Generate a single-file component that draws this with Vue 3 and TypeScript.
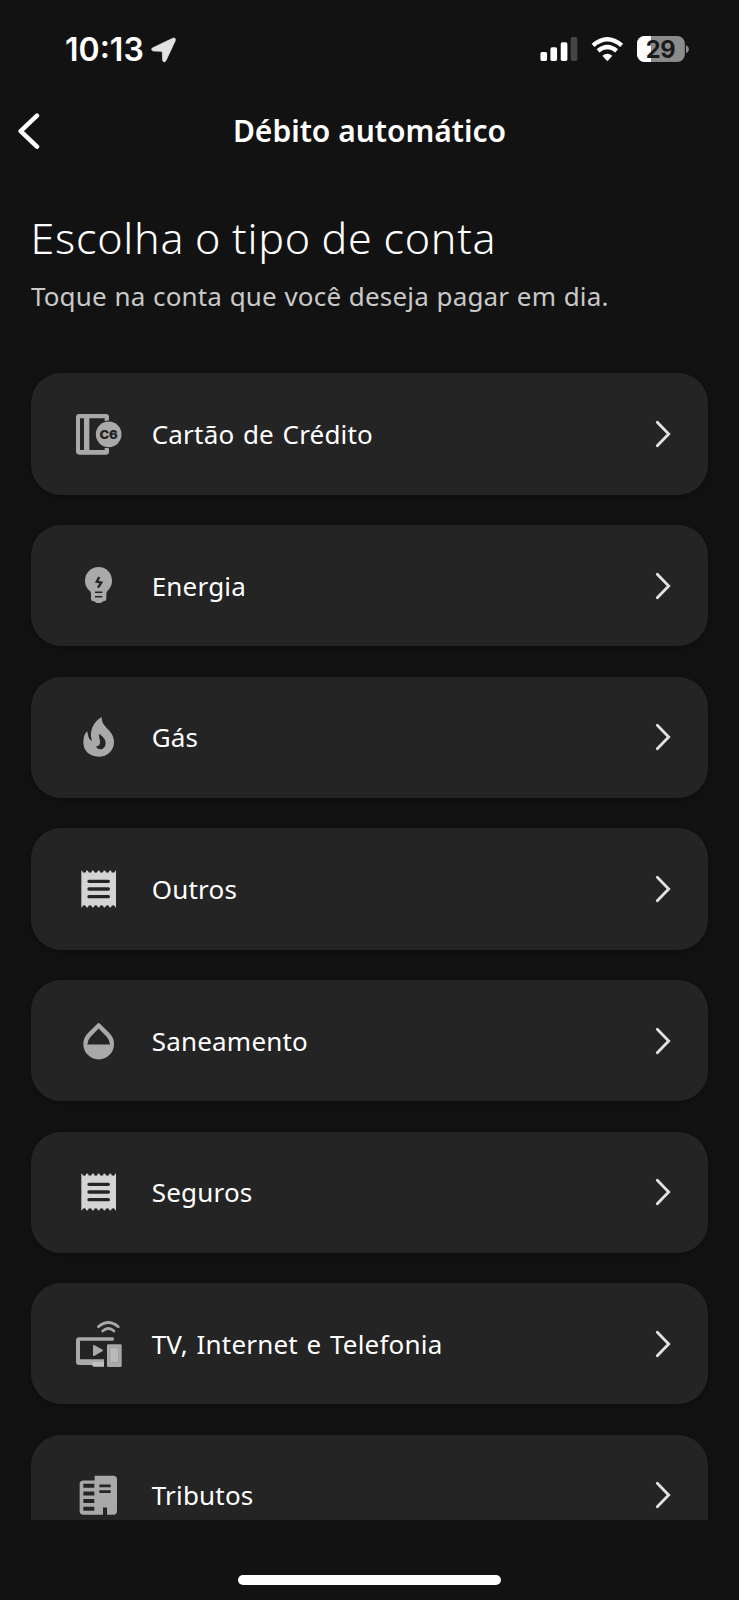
<script setup lang="ts">
type IconName = 'card' | 'bulb' | 'flame' | 'receipt' | 'drop' | 'devices' | 'building'

interface AccountType {
  label: string
  icon: IconName
}

const accounts: AccountType[] = [
  { label: 'Cartão de Crédito', icon: 'card' },
  { label: 'Energia', icon: 'bulb' },
  { label: 'Gás', icon: 'flame' },
  { label: 'Outros', icon: 'receipt' },
  { label: 'Saneamento', icon: 'drop' },
  { label: 'Seguros', icon: 'receipt' },
  { label: 'TV, Internet e Telefonia', icon: 'devices' },
  { label: 'Tributos', icon: 'building' },
]

const receiptNotches = [192.7, 210, 227.3, 244.7, 262, 279.3]
</script>

<template>
  <div class="screen">
    <header class="status">
      <div class="clock">
        <span class="time">10:13</span>
        <svg class="location" viewBox="454 110 76 78">
          <path d="M519 114 Q529 110 527 121 L499 181 Q494 189 489 181 L488 157 Q488 153 484 153 L461 152 Q452 149 458 143 Z" fill="#e2e2e2" stroke="#e2e2e2" stroke-width="2" stroke-linejoin="round" />
        </svg>
      </div>
      <svg class="indicators" viewBox="510 105 456 85">
        <rect x="514" y="156" width="20" height="27" rx="5" fill="#fff" />
        <rect x="544" y="142" width="20" height="41" rx="5" fill="#fff" />
        <rect x="575" y="127" width="20" height="56" rx="5" fill="#fff" />
        <rect x="605" y="111" width="20" height="72" rx="5" fill="#444" />
        <g fill="none" stroke="#fff" stroke-width="13">
          <path d="M672 136 Q715 99 758 136" />
          <path d="M687 153 Q715 129 743 153" />
        </g>
        <path d="M700 167 Q715 155 730 167 L718 181 Q715 184 712 181 Z" fill="#fff" />
        <clipPath id="battery-body"><rect x="804" y="108" width="144" height="78" rx="23" /></clipPath>
        <g clip-path="url(#battery-body)">
          <rect x="804" y="108" width="144" height="78" fill="#8b8b8b" />
          <rect x="804" y="108" width="42" height="78" fill="#fff" />
        </g>
        <path d="M951 135 Q960 139 960 147 Q960 156 951 160 Z" fill="#8b8b8b" />
        <text x="874.5" y="174" class="battery-text" text-anchor="middle">29</text>
      </svg>
    </header>

    <nav class="topbar">
      <svg class="back" viewBox="50 335 70 115">
        <path d="M110 346 L61 392.500 L110 439" fill="none" stroke="#fff" stroke-width="13.500" stroke-linecap="round" stroke-linejoin="round" />
      </svg>
      <span class="title">Débito automático</span>
    </nav>

    <main class="content">
      <h1 class="heading">Escolha o tipo de conta</h1>
      <p class="subtitle">Toque na conta que você deseja pagar em dia.</p>

      <ul class="list">
        <li v-for="account in accounts" :key="account.label" class="item">
          <svg class="icon" viewBox="0 0 60 60" fill="#a9a9a9">
            <g v-if="account.icon === 'card'" transform="translate(-49 -44) scale(.33333)">
              <path fill-rule="evenodd" d="M178 162 H258 Q267 162 267 171 V181 L254 184 V175 H208 V270 H254 V263 L267 265 V275 Q267 284 258 284 H178 Q168 284 168 274 V172 Q168 162 178 162 Z M180 175 V270 H192 V175 Z" />
              <circle cx="266" cy="223" r="41" fill="#242424" />
              <circle cx="266" cy="223" r="38.500" />
              <text x="266" y="236" text-anchor="middle" textLength="55" lengthAdjust="spacingAndGlyphs" class="badge-text">C6</text>
            </g>
            <g v-else-if="account.icon === 'bulb'" transform="translate(-49 -35.700) scale(.33333)">
              <path d="M236 140 C259 140 276 158 276 181 C276 196 269 205 262 212 Q259 215 259 222 V236 Q259 242 253 242 L247 244 Q244 248 240 248 H232 Q228 248 225 244 L219 242 Q213 242 213 236 V222 Q213 215 210 212 C202 205 195 196 195 181 C195 158 213 140 236 140 Z" />
              <path d="M238 170 L230 184 L244 187 L234 202" fill="none" stroke="#242424" stroke-width="7" />
              <path d="M225 216 H247 M225 229 H247" stroke="#242424" stroke-width="4.500" />
            </g>
            <g v-else-if="account.icon === 'flame'" transform="translate(-49 -187.300) scale(.33333)">
              <path d="M245 592 C221 606 206 634 216 664 C206 660 204 649 202 635 C193 642 190 655 190 668 C190 694 209 711 236 711 C263 711 282 692 282 666 C282 630 244 626 245 592 Z" />
              <path d="M239 642 C243 648 258 656 257 671 C256 684 248 690 240 689 Q231 688 228 681 C238 679 241 673 240 664 C239 655 235 651 239 642 Z" fill="#242424" />
            </g>
            <g v-else-if="account.icon === 'receipt'" transform="translate(-49 -39) scale(.33333)">
              <rect x="184" y="152" width="104" height="110" fill="#d4d4d4" />
              <template v-for="x in receiptNotches" :key="x">
                <circle :cx="x" cy="152" r="6" fill="#242424" />
                <circle :cx="x" cy="262" r="6" fill="#242424" />
              </template>
              <path d="M207 184 H265 M207 207 H265 M207 230 H265" stroke="#242424" stroke-width="10" stroke-linecap="round" />
            </g>
            <g v-else-if="account.icon === 'drop'" transform="translate(-49 -190.600) scale(.33333)">
              <path fill-rule="evenodd" d="M232 610 Q236 606 240 610 L268 638 A46 46 0 1 1 204 638 Z M236 624 L260 649 Q270 660 270 672 H202 Q202 660 212 649 Z" />
            </g>
            <g v-else-if="account.icon === 'devices'" transform="translate(-49 -44) scale(.33333)">
              <path d="M235 170 Q265 145 295 170 M248 183 Q265 168 282 183" fill="none" stroke="#a9a9a9" stroke-width="8" stroke-linecap="round" />
              <path d="M178 202 H278 Q282 202 282 207 Q282 212 278 212 H180 V268 H252 V285 H178 Q168 285 168 275 V212 Q168 202 178 202 Z" />
              <path d="M219 227 Q220 223 224 226 L248 239 Q250 241 248 243 L224 257 Q220 259 219 255 Z" />
              <path d="M221 276 H252 V290 H221 Q216 289 216 283 Q216 277 221 276 Z" fill="#c0c0c0" />
              <rect x="261" y="223" width="44" height="68" rx="4" />
              <rect x="270" y="233" width="25" height="45" fill="#b9b9b9" stroke="#999" stroke-width="2" />
            </g>
            <g v-else transform="translate(-49 -45.600) scale(.33333)">
              <path d="M190 183 H224 V169 H280 Q291 169 291 180 V275 Q291 286 280 286 H261 V264 H249 V286 H190 Q179 286 179 275 V194 Q179 183 190 183 Z" />
              <path d="M190 199 H223 M190 222 H223 M190 245 H223 M190 268 H223" stroke="#242424" stroke-width="12" />
              <path d="M238 199.500 H272 M238 216.500 H272" stroke="#242424" stroke-width="8.500" />
            </g>
          </svg>
          <span class="label">{{ account.label }}</span>
          <svg class="chevron" viewBox="0 0 18 30">
            <path d="M3.300 3.200 L14.700 15 L3.300 26.800" fill="none" stroke="#e2e2e2" stroke-width="2.800" stroke-linecap="round" />
          </svg>
        </li>
      </ul>
    </main>

    <footer class="bottom"><div class="home-indicator"></div></footer>
  </div>
</template>

<style>
html,
body {
  background: #121212;
}
</style>

<style scoped>
.screen {
  width: 739px;
  height: 1600px;
  display: flex;
  flex-direction: column;
  overflow: hidden;
  background: #121212;
  color: #fff;
  font-family: 'Noto Sans', sans-serif;
}
.status {
  flex: none;
  height: 98px;
  box-sizing: border-box;
  padding: 0 48px 0 65px;
  display: flex;
  align-items: center;
  justify-content: space-between;
}
.clock {
  display: flex;
  align-items: center;
  gap: 7px;
  padding-top: 2px;
}
.time {
  font: 600 32px/40px Inter, sans-serif;
  letter-spacing: 0;
}
.location {
  width: 25.300px;
  height: 26px;
}
.indicators {
  width: 152px;
  height: 28.300px;
}
.battery-text {
  font: 700 71px Inter, sans-serif;
  letter-spacing: -1px;
  fill: #1a1a1a;
}
.badge-text {
  font: 900 36px Inter, sans-serif;
  fill: #242424;
}
.topbar {
  flex: none;
  height: 66px;
  display: grid;
  grid-template-columns: 60px 1fr 60px;
  align-items: center;
}
.back {
  width: 23.300px;
  height: 38.300px;
  margin-left: 16.600px;
}
.title {
  text-align: center;
  font-size: 30px;
  line-height: 40px;
  font-weight: 600;
  white-space: nowrap;
}
.content {
  flex: none;
  height: 1356px;
  box-sizing: border-box;
  overflow: hidden;
  padding: 0 30.600px 0 30.500px;
}
.heading {
  margin: 44px 0 0;
  font-size: 43px;
  line-height: 60px;
  font-weight: 300;
  letter-spacing: 0.750px;
  word-spacing: -1.100px;
  white-space: nowrap;
}
.subtitle {
  margin: 8px 0 0 0.400px;
  font-size: 26px;
  line-height: 40px;
  letter-spacing: 0.180px;
  word-spacing: 0.600px;
  color: #c9c9c9;
  white-space: nowrap;
}
.list {
  list-style: none;
  margin: 57.400px 0 0;
  padding: 0;
  display: flex;
  flex-direction: column;
  gap: 30.340px;
}
.item {
  flex: none;
  height: 121.300px;
  box-sizing: border-box;
  padding: 0 36.900px 0 38.500px;
  display: flex;
  align-items: center;
  border-radius: 30.300px;
  background: #242424;
  box-shadow: 0 2px 8px rgba(0, 0, 0, 0.3);
}
.icon {
  width: 60px;
  height: 60px;
}
.label {
  flex: 1;
  margin-left: 22.700px;
  font-size: 26px;
  line-height: 40px;
  letter-spacing: 0.200px;
  word-spacing: 1.600px;
  white-space: nowrap;
}
.chevron {
  width: 18px;
  height: 30px;
}
.bottom {
  flex: 1;
  display: flex;
  justify-content: center;
  align-items: flex-end;
  padding-bottom: 15.300px;
}
.home-indicator {
  width: 263.500px;
  height: 9.700px;
  border-radius: 5px;
  background: #fff;
}
</style>
